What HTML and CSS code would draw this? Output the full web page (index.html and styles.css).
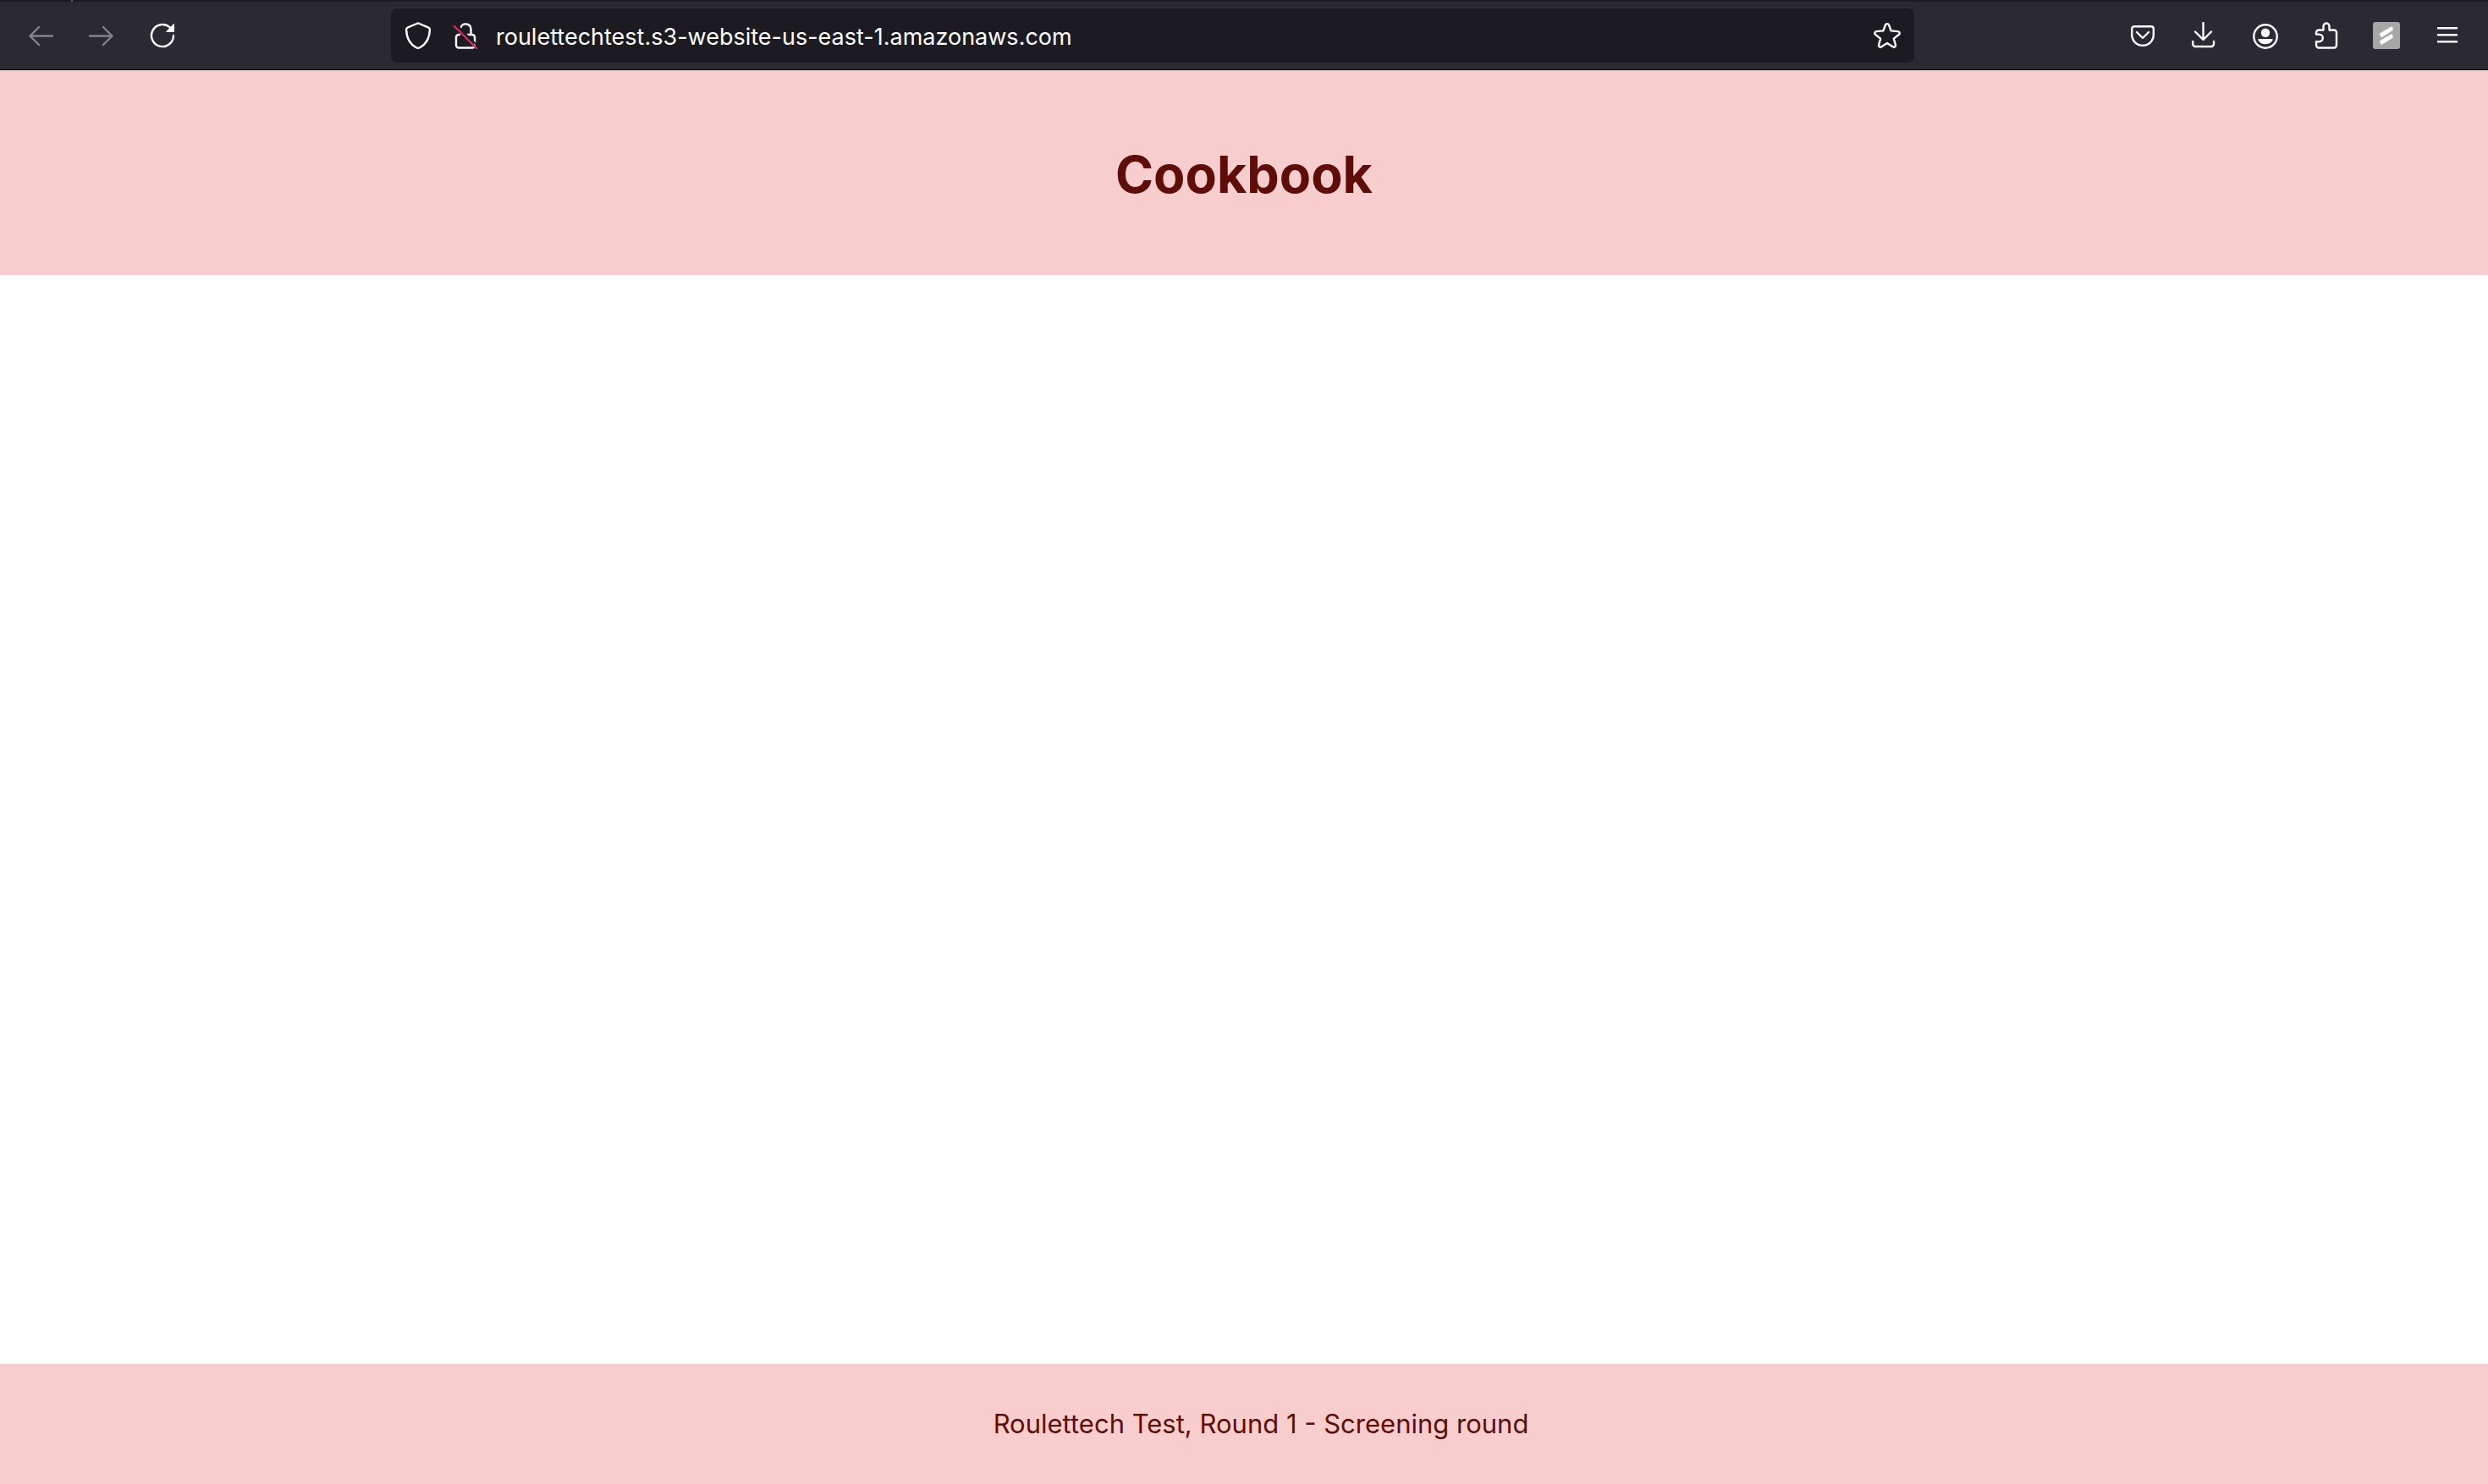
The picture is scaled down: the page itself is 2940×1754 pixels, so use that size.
FILE: index.html
```html
<!DOCTYPE html>
<html lang="en">
<head>
<meta charset="utf-8">
<meta name="viewport" content="width=device-width, initial-scale=1">
<title>Cookbook</title>
<link rel="stylesheet" href="styles.css">
</head>
<body>
<div class="browser">
  <div class="tab-edge"><span class="tab-tick"></span></div>
  <div class="toolbar">
    <nav class="button-group" aria-label="Navigation">
      <button class="tool" type="button" aria-label="Back" disabled>
        <svg class="icon" viewBox="0 0 32 32"><path d="M30 16.500H3.500M14 6 3.500 16.500 14 27"/></svg>
      </button>
      <button class="tool" type="button" aria-label="Forward" disabled>
        <svg class="icon" viewBox="0 0 32 32"><path d="M2 16.500h26.500M18 6l10.500 10.500L18 27"/></svg>
      </button>
      <button class="tool" type="button" aria-label="Reload">
        <svg class="icon" viewBox="0 0 32 32"><path d="M29 16A13 13 0 1 1 24.500 6.200"/><path class="solid" d="M29 2.200q1-.8 1 .5V11q0 .9-.9.900h-8.200q-1.300 0-.4-1z"/></svg>
      </button>
    </nav>
    <form class="urlbar">
      <button class="tool tool-small" type="button" aria-label="Tracking protection">
        <svg class="icon" viewBox="0 0 32 32"><path d="M16 1.500Q16.700 1.500 17.500 2L28.500 6.700Q30 7.500 29.900 9.200C29.500 19 25 26.500 18 30.300Q16 31.300 14 30.300C7 26.500 2.500 19 2.100 9.200Q2 7.500 3.500 6.700L14.500 2Q15.300 1.500 16 1.500Z"/></svg>
      </button>
      <button class="tool tool-small" type="button" aria-label="Connection not secure">
        <svg class="icon" viewBox="0 0 32 32"><path d="M10.500 6.500A6.200 6.200 0 0 1 22.500 8.200V15M9 15H8a3 3 0 0 0-3 3v9.500a3 3 0 0 0 3 3H24a3 3 0 0 0 3-3V18a3 3 0 0 0-3-3h-6"/><path class="slash-gap" d="M4.500 2.500 31 29"/><path class="slash" d="M3 5 29 31"/></svg>
      </button>
      <input class="address" type="text" aria-label="Address" value="roulettechtest.s3-website-us-east-1.amazonaws.com">
      <button class="tool tool-small" type="button" aria-label="Bookmark this page">
        <svg class="icon" viewBox="0 0 32 32"><path d="M13.900 3.500a2.300 2.300 0 0 1 4.200 0L20.600 10.400 28.800 11.100a2.100 2.100 0 0 1 1.200 3.700L23.800 19.600 25.900 27a2.100 2.100 0 0 1-3.200 2.300L16 25 9.300 29.300A2.100 2.100 0 0 1 6.100 27L8.200 19.600 2 14.800a2.100 2.100 0 0 1 1.200-3.700L11.400 10.400Z"/></svg>
      </button>
    </form>
    <div class="button-group">
      <button class="tool" type="button" aria-label="Save to Pocket">
        <svg class="icon" viewBox="0 0 32 32"><path d="M6 5.200H26a2.800 2.800 0 0 1 2.800 2.800V15A12.800 12.800 0 0 1 3.200 15V8A2.800 2.800 0 0 1 6 5.200ZM9 12l7 7 7-7"/></svg>
      </button>
      <button class="tool" type="button" aria-label="Downloads">
        <svg class="icon" viewBox="0 0 32 32"><path d="M15.500 1V20.500M6 11.500l9.500 9.500 9.500-9.500M3.200 23v3a3 3 0 0 0 3 3H25a3 3 0 0 0 3-3V23"/></svg>
      </button>
      <button class="tool" type="button" aria-label="Account">
        <svg class="icon" viewBox="0 0 32 32"><circle cx="17" cy="17" r="13.700"/><circle class="solid" cx="17" cy="12.800" r="5.200"/><path class="solid" d="M9.200 20H24.800q1.800 0 .8 1.500C23.500 24.800 20.500 26.300 17 26.300S10.500 24.800 8.400 21.500Q7.400 20 9.200 20Z"/></svg>
      </button>
      <button class="tool" type="button" aria-label="Extensions">
        <svg class="icon" viewBox="0 0 32 32"><path d="M8 9.500h5.500V5a3.500 3.500 0 0 1 7 0v4.500H26a3 3 0 0 1 3 3V27.500a3 3 0 0 1-3 3H8a3 3 0 0 1-3-3V23.200H8.500a4.300 4.300 0 0 0 0-8.600H5V12.500a3 3 0 0 1 3-3Z"/></svg>
      </button>
      <button class="tool" type="button" aria-label="Extension">
        <svg class="icon" viewBox="0 0 32 32"><rect class="badge" width="32" height="32" rx="3"/><path class="solid" d="M8.300 13.300 21.500 5.400q1-.5 1.500.6l1 3.500L10.500 18.200q-1 .3-1.500-.9L8 14.500ZM8.300 22.200 21.500 14.300q1-.5 1.500.6l1 3.500L10.500 26.700q-1 .3-1.500-.9L8 23.200Z"/></svg>
      </button>
      <button class="tool" type="button" aria-label="Menu">
        <svg class="icon" viewBox="0 0 32 32"><path d="M5 7.300H27M5 15.300H27M5 23.300H27"/></svg>
      </button>
    </div>
  </div>
</div>
<header class="site-header">
  <h1 class="site-title">Cookbook</h1>
</header>
<main class="content"></main>
<footer class="site-footer">
  <ul class="footer-list">
    <li>Roulettech Test, Round 1 - Screening round</li>
  </ul>
</footer>
</body>
</html>
```
FILE: styles.css
```css
* {
  box-sizing: border-box;
}

body {
  margin: 0;
  min-height: 100vh;
  display: flex;
  flex-direction: column;
  background: #fff;
  color: #5e0d09;
  font-family: Inter, "Liberation Sans", sans-serif;
  font-size: 31px;
}

.browser {
  background: #2b2a33;
  border-bottom: 1px solid #0c0c0d;
}

.tab-edge {
  display: flex;
  height: 2px;
  padding-left: 84px;
  background: #1c1b22;
}

.tab-tick {
  width: 2px;
  background: #5b5b66;
}

.toolbar {
  display: flex;
  align-items: center;
  height: 80px;
  padding: 0 12px;
}

/* Flexible spacers on both sides of the address bar */
.toolbar::before,
.toolbar::after {
  content: "";
  flex: 13;
}

.toolbar::before {
  order: 2;
}

.toolbar::after {
  order: 4;
}

.button-group {
  display: flex;
  order: 1;
}

.urlbar {
  display: flex;
  align-items: center;
  flex: 100;
  order: 3;
  height: 64px;
  border-radius: 8px;
  background: #1c1b22;
}

.urlbar ~ .button-group {
  order: 5;
}

.tool {
  display: flex;
  align-items: center;
  justify-content: center;
  width: 72px;
  height: 64px;
  padding: 0;
  border: 0;
  background: none;
  color: #fbfbfe;
}

.tool:disabled {
  color: #85848b;
}

.tool-small {
  width: 56px;
}

.tool-small:first-child {
  margin-left: 4px;
}

.tool-small:last-child {
  margin-right: 4px;
}

.icon {
  width: 32px;
  height: 32px;
  fill: none;
  stroke: currentColor;
  stroke-width: 2.4;
  stroke-linecap: round;
  stroke-linejoin: round;
}

.icon .solid {
  fill: currentColor;
  stroke: none;
}

.icon .badge {
  fill: #a6a6a6;
  stroke: none;
}

.icon .slash {
  stroke: #e22850;
}

.icon .slash-gap {
  stroke: #1c1b22;
}

.address {
  flex: 1;
  min-width: 0;
  height: 64px;
  padding: 2px 8px 0;
  border: 0;
  outline: 0;
  background: none;
  color: #fbfbfe;
  font-family: inherit;
  font-size: 27px;
}

.site-header {
  padding: 82px 40px 78px;
  background: #f7cdcd;
  text-align: center;
}

.site-title {
  margin: 0;
  font-size: 61px;
  font-weight: 700;
  line-height: 82px;
}

.content {
  flex: 1;
}

.site-footer {
  padding: 52px 0;
  background: #f7cdcd;
  text-align: center;
}

.footer-list {
  margin: 0;
  padding: 0 0 0 40px;
  list-style: none;
  line-height: 38px;
}
```
